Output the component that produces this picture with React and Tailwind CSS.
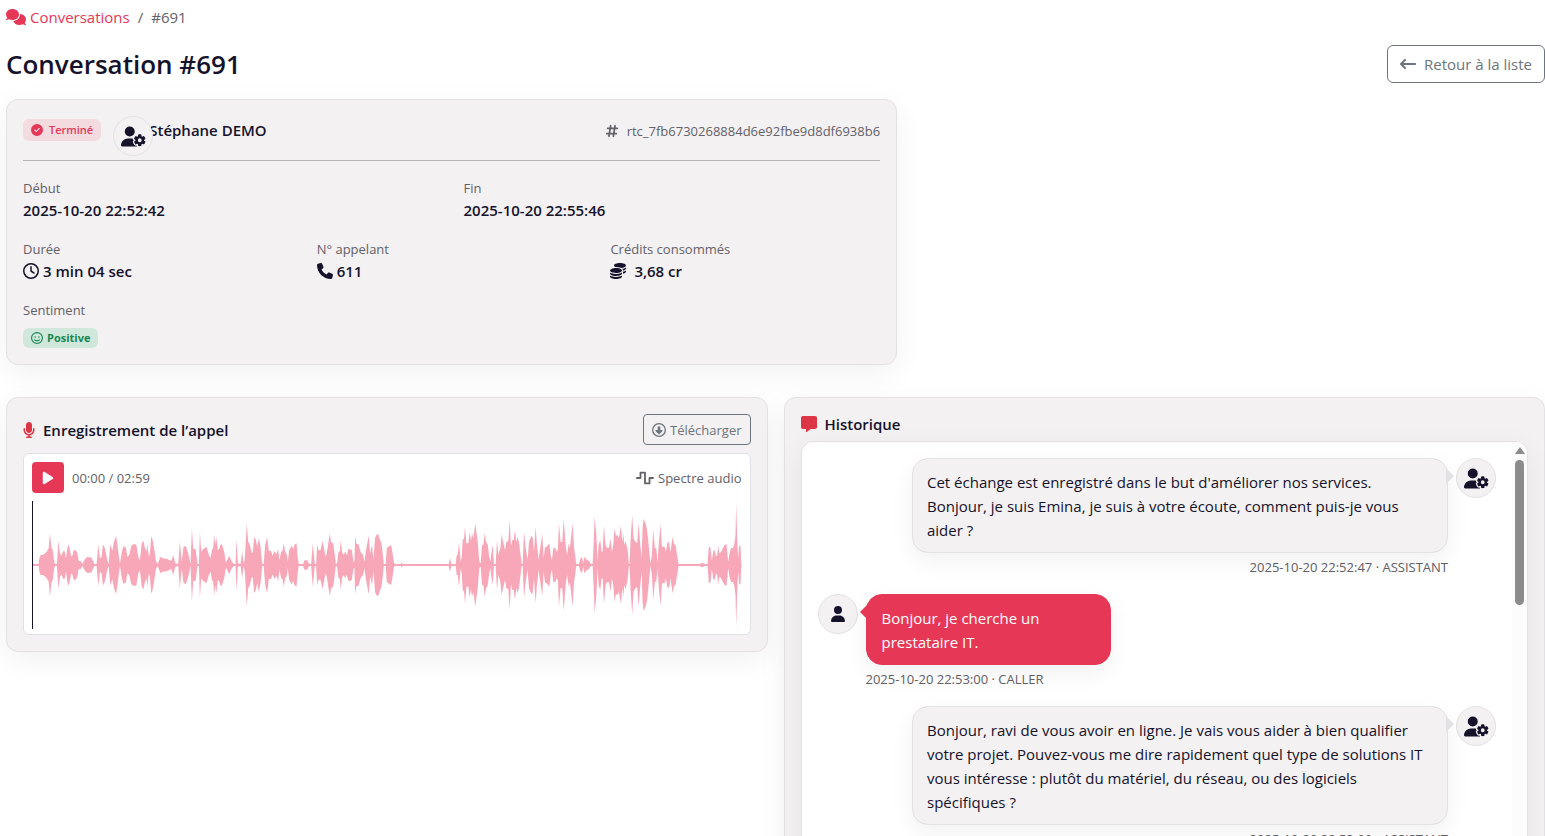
import React from 'react';
import {
  FaArrowLeftLong,
  FaCircleCheck,
  FaCoins,
  FaComments,
  FaHashtag,
  FaMessage,
  FaMicrophone,
  FaPhone,
  FaPlay,
  FaRegCircleDown,
  FaRegClock,
  FaRegFaceSmile,
  FaUser,
  FaUserGear,
  FaWaveSquare,
} from 'react-icons/fa6';

// Peaks as "x:amplitude", x counted from the start of the segment
const SEGMENTS = [
  {
    start: -6,
    peaks:
      '6:3 26:3 28:20 32:30 38:30 44:34 50:40 56:50 60:95 64:55 68:45 72:15 75:3 81:3 85:72 90:35 94:28 100:42 104:42 108:20 112:50 116:62 120:45 124:25 128:30 131:44 138:44 143:32 146:12 152:12 157:3 164:16 170:23 184:23 190:10 193:3 200:3 205:62 210:20 215:25 219:62 224:52 228:35 232:15 236:3 241:62 247:42 252:70 259:86 264:48 270:3 276:42 281:57 288:52 292:25 298:30 304:57 310:62 319:62 325:25 330:15 335:62 340:74 345:52 350:40 352:65 357:25 360:35 364:86 368:76 373:48 378:12 383:3 392:25 398:20 412:18 424:12 430:30 436:5 445:3 450:72 455:10 461:55 468:57 475:35 482:3 486:110 490:48 497:48 503:3 507:3 510:100 514:40 520:48 530:54 537:30 542:20 546:45 550:50 553:92 556:60 559:85 564:45 568:48 571:60 576:62 583:40 588:8 592:14 598:28 606:10 612:3 617:3 620:78 624:5 632:3 637:40 641:3 645:20 651:125 655:70 660:60 666:35 669:40 673:84 678:75 682:55 687:80 692:55 697:3 701:3',
  },
  {
    start: 684,
    peaks:
      '12:10 16:60 22:84 27:42 34:42 38:28 44:42 50:32 55:48 59:15 64:40 68:42 72:65 76:40 81:32 84:10 88:45 96:58 100:48 105:62 110:65 114:20 117:3 130:3 134:14 142:14 148:3 154:3 159:66 165:3 169:3 172:60 176:44 182:44 188:72 193:48 197:25 201:35 205:62 210:94 214:68 220:66 225:30 228:3 232:5 236:38 240:42 243:74 247:38 252:30 256:40 261:30 266:48 276:46 281:10 284:10 286:86 290:64 296:62 303:38 310:30 314:10 318:40 322:62 327:88 331:35 337:60 341:15 346:82 350:90 355:94 360:78 365:66 369:35 372:3 378:3 381:50 386:55 394:60 398:38 403:5 406:3 424:3 426:8 429:3 567:3 571:20 575:3 588:3 591:30 594:30 598:65 603:10 606:25 609:75 613:80 616:115 620:65 626:65 630:98 634:72 637:95 641:80 647:125 650:100 654:70 659:10 663:5 667:60 671:60 675:95 679:70 684:62 688:30 692:10 696:42 699:60 703:3 708:3 712:75 716:30',
  },
  {
    start: 1404,
    peaks:
      '2:50 6:92 10:70 16:45 20:70 26:72 30:135 34:58 38:75 42:75 46:105 50:68 54:85 58:68 62:35 66:3 69:3 73:100 78:50 84:15 88:70 95:86 99:85 103:40 108:115 112:60 117:15 120:40 124:65 128:92 132:20 136:52 144:58 149:65 154:25 157:15 161:50 167:52 172:38 175:50 178:125 183:68 188:70 192:138 196:90 199:50 203:30 207:65 210:50 213:70 219:125 223:55 230:3 238:3 244:24 248:20 251:5 255:26 259:18 268:12 274:3 279:3 282:60 285:145 290:95 294:10 297:60 302:75 306:40 309:40 313:118 318:60 322:52 328:52 333:80 337:40 341:60 345:110 349:88 354:90 358:80 364:118 368:70 371:95 374:60 378:72 384:45 388:3 390:3 393:75 398:150 402:80 407:70 413:66 417:126 421:75 426:20 429:110 432:138 438:125 442:108 446:75 450:30 453:3 457:30 461:105 466:50 470:50 474:10 478:70 483:122 487:55 495:55 499:40 503:65 508:70 513:40 519:85 524:62 528:60 533:28 537:3 602:3 605:7 612:5 616:3 624:3 628:55 633:52 637:12 641:42 645:45 649:28 653:28 656:60 659:35 664:38 670:50 675:60 681:62 686:10 690:35 695:52 700:50 704:60 708:90 710:185 713:85 716:20 719:58 723:58 725:10 726:3',
  },
];

const POINTS = SEGMENTS.flatMap(({ start, peaks }) =>
  peaks.split(' ').map((pair) => {
    const [x, amp] = pair.split(':').map(Number);
    return [start + x, amp];
  })
);

const WAVE_PATH = [
  ...POINTS.map(([x, amp]) => `${x},${192 - amp}`),
  ...[...POINTS].reverse().map(([x, amp]) => `${x},${192 + amp}`),
].join(' ');

const MESSAGES = [
  {
    role: 'ASSISTANT',
    time: '2025-10-20 22:52:47',
    text: "Cet échange est enregistré dans le but d'améliorer nos services. Bonjour, je suis Emina, je suis à votre écoute, comment puis-je vous aider ?",
  },
  {
    role: 'CALLER',
    time: '2025-10-20 22:53:00',
    text: 'Bonjour, je cherche un prestataire IT.',
  },
  {
    role: 'ASSISTANT',
    time: '2025-10-20 22:53:09',
    text: 'Bonjour, ravi de vous avoir en ligne. Je vais vous aider à bien qualifier votre projet. Pouvez-vous me dire rapidement quel type de solutions IT vous intéresse : plutôt du matériel, du réseau, ou des logiciels spécifiques ?',
  },
];

function Card({ className = '', children }) {
  return (
    <section
      className={`rounded-xl border border-[#e3e1e3] bg-[#f4f1f3] p-4 shadow-[0_8px_30px_rgba(0,0,0,0.06)] ${className}`}
    >
      {children}
    </section>
  );
}

function Field({ label, children }) {
  return (
    <div>
      <dt className="pt-0.5 text-[13px] leading-[19px] text-[#636168]">{label}</dt>
      <dd className="flex min-h-6 items-center gap-1 font-semibold">{children}</dd>
    </div>
  );
}

function Avatar({ children }) {
  return (
    <div className="flex size-10 shrink-0 items-center justify-center rounded-full border border-[#e3e1e3] bg-[#f4f1f3]">
      {children}
    </div>
  );
}

function Message({ role, time, text }) {
  const isCaller = role === 'CALLER';

  return (
    <li className={`flex items-start gap-2 ${isCaller ? '' : 'flex-row-reverse'}`}>
      <Avatar>{isCaller ? <FaUser className="size-4" /> : <FaUserGear className="size-[25px]" />}</Avatar>
      <div className={isCaller ? 'w-[245px]' : 'w-[85%] max-w-[536px]'}>
        <div
          className={`relative rounded-2xl border pt-[11px] pb-[10px] leading-6 shadow-[0_8px_24px_rgba(0,0,0,0.06)] ${
            isCaller
              ? 'border-[#e63757] bg-[#e63757] px-[15px] font-medium text-white'
              : 'border-[#e3e1e3] bg-[#f4f1f3] px-[14px]'
          }`}
        >
          {text}
          {/* Tail pointing at the avatar */}
          <span
            className={`absolute top-[9px] border-y-8 border-y-transparent ${
              isCaller ? '-left-[7px] border-r-8 border-r-[#e63757]' : '-right-[7px] border-l-8 border-l-[#e3e1e3]'
            }`}
          />
        </div>
        <p className={`mt-1 text-[13px] leading-[21px] text-[#636168] ${isCaller ? '' : 'text-right'}`}>
          {time} · {role}
        </p>
      </div>
    </li>
  );
}

export default function App() {
  return (
    <div className="h-screen overflow-hidden bg-white pl-1.5 font-['Open_Sans','Noto_Sans',sans-serif] text-[15px] leading-6 text-[#15122b]">
      <nav aria-label="Fil d'Ariane" className="flex items-center gap-2 pt-[5px] text-[#636168]">
        <a href="#conversations" className="flex items-center gap-1 text-[#e63757]">
          <FaComments className="size-5" />
          Conversations
        </a>
        <span>/</span>
        <span>#691</span>
      </nav>

      <header className="mt-4 flex h-[38px] items-center justify-between">
        <h1 className="text-[26px] font-semibold">Conversation #691</h1>
        <button
          type="button"
          className="flex h-[38px] items-center gap-2 rounded-md border border-[#6c757d] px-3 text-[#6c757d]"
        >
          <FaArrowLeftLong className="size-4" />
          Retour à la liste
        </button>
      </header>

      <div className="mt-4 grid grid-cols-12 gap-4">
        <Card className="col-span-7">
          <div className="flex h-[45px] items-start justify-between border-b border-[#b7b5b8]">
            <div className="flex items-center">
              <span className="flex h-[22px] items-center gap-1.5 rounded-md bg-[#f4dbe0] px-2 text-[11px] font-semibold text-[#e63757]">
                <FaCircleCheck className="size-3" />
                Terminé
              </span>
              <div className="relative ml-3 h-7 w-9">
                <div className="absolute top-0 left-0 z-10">
                  <Avatar>
                    <FaUserGear className="size-[25px]" />
                  </Avatar>
                </div>
              </div>
              <span className="font-semibold">Stéphane DEMO</span>
            </div>
            <span className="flex h-[30px] items-center gap-2 text-[13px] text-[#636168]">
              <FaHashtag className="size-[14px]" />
              rtc_7fb6730268884d6e92fbe9d8df6938b6
            </span>
          </div>

          <dl className="mt-4 flex flex-col gap-4">
            <div className="grid grid-cols-2 gap-x-6">
              <Field label="Début">2025-10-20 22:52:42</Field>
              <Field label="Fin">2025-10-20 22:55:46</Field>
            </div>
            <div className="grid grid-cols-3 gap-x-6">
              <Field label="Durée">
                <FaRegClock className="size-4" />3 min 04 sec
              </Field>
              <Field label="N° appelant">
                <FaPhone className="size-4" />
                611
              </Field>
              <Field label="Crédits consommés">
                <FaCoins className="mr-1 size-4" />
                3,68 cr
              </Field>
            </div>
            <Field label="Sentiment">
              <span className="mt-2 flex h-5 items-center gap-1 rounded-md bg-[#d0e7dc] px-2 text-[11px] font-bold text-[#198754]">
                <FaRegFaceSmile className="size-3" />
                Positive
              </span>
            </Field>
          </dl>
        </Card>
      </div>

      <div className="mt-8 grid grid-cols-2 items-start gap-4">
        <Card>
          <div className="flex items-center justify-between">
            <h2 className="flex items-center gap-2 font-semibold">
              <FaMicrophone className="h-4 w-3 text-[#dc3545]" />
              Enregistrement de l’appel
            </h2>
            <button
              type="button"
              className="flex h-[31px] items-center gap-1 rounded-sm border border-[#6c757d] px-2 text-[13px] text-[#6c757d]"
            >
              <FaRegCircleDown className="size-[14px]" />
              Télécharger
            </button>
          </div>

          <div className="mt-2 rounded-md border border-[#dee2e6] bg-white px-2 pt-2 pb-[5px]">
            <div className="flex items-center justify-between text-[13px] text-[#636168]">
              <div className="flex items-center gap-2">
                <button
                  type="button"
                  aria-label="Lecture"
                  className="flex h-[31px] w-8 items-center justify-center rounded-sm bg-[#e63757] text-white"
                >
                  <FaPlay className="size-[14px]" />
                </button>
                <span>00:00 / 02:59</span>
              </div>
              <span className="flex items-center gap-1">
                <FaWaveSquare className="size-[18px]" />
                Spectre audio
              </span>
            </div>
            <svg viewBox="0 0 2130 384" preserveAspectRatio="none" className="mt-2 block h-32 w-full">
              <polygon points={WAVE_PATH} fill="#f8a7b8" />
              <rect x="0" y="0" width="3" height="384" fill="#15122b" />
            </svg>
          </div>
        </Card>

        <Card>
          <h2 className="flex h-[19px] items-center gap-2 font-semibold">
            <FaMessage className="size-4 text-[#dc3545]" />
            Historique
          </h2>
          <div className="mt-2 flex h-[560px] overflow-hidden rounded-xl border border-[#e3e1e3] bg-white shadow-[0_8px_30px_rgba(0,0,0,0.06)]">
            <ul className="flex flex-1 flex-col gap-4 p-4">
              {MESSAGES.map((message) => (
                <Message key={message.time} {...message} />
              ))}
            </ul>
            {/* Scrollbar */}
            <div className="flex w-[15px] flex-col items-center gap-1.5 bg-[#fcfcfc] pt-[5px]">
              <span className="border-x-[5px] border-b-[7px] border-x-transparent border-b-[#8b8b8b]" />
              <span className="h-[145px] w-[9px] rounded-full bg-[#8b8b8b]" />
            </div>
          </div>
        </Card>
      </div>
    </div>
  );
}
